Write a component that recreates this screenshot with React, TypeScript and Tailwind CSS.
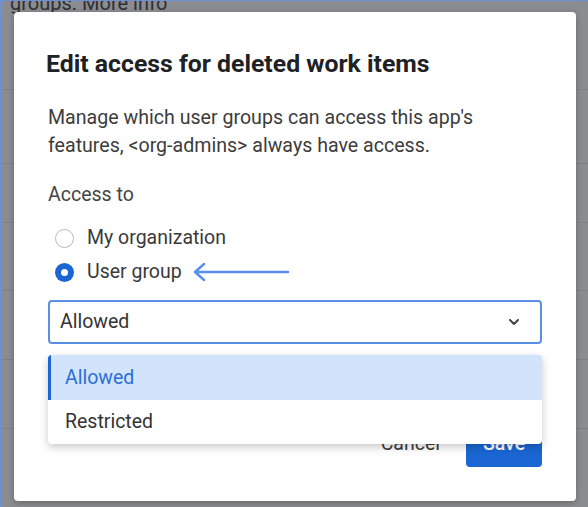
import { ChevronDown } from "lucide-react"

const rows = [89, 74, 59, 68, 69, 69, 79]

function Radio({ checked, label }: { checked?: boolean; label: string }) {
  return (
    <label className="flex items-center gap-[13px] h-[34px]">
      {checked ? (
        <span className="w-[19px] h-[19px] rounded-full bg-[#1a66d2] flex items-center justify-center">
          <span className="w-[7px] h-[7px] rounded-full bg-white" />
        </span>
      ) : (
        <span className="w-[19px] h-[19px] rounded-full border-[1.5px] border-[#b9b9b9] bg-white" />
      )}
      <span className="text-[19.5px] text-[#3a3a3a]">{label}</span>
    </label>
  )
}

export default function App() {
  return (
    <div className="relative w-[588px] h-[507px] overflow-hidden bg-[#8a8c90] font-['Roboto',sans-serif] border-l-2 border-t border-[#6d8fd8]">
      {/* page behind the overlay */}
      <div className="flex flex-col">
        {rows.map((h, i) => (
          <div key={i} style={{ height: h }} className="border-b border-[#7f8185] px-2">
            {i === 0 && <div className="text-[20px] leading-none -mt-[8px] text-[#2e2f31]">groups. More info</div>}
          </div>
        ))}
      </div>

      {/* dialog */}
      <div className="absolute left-[12px] top-[11px] w-[562px] h-[489px] bg-white rounded-[4px] shadow-[0_2px_6px_rgba(0,0,0,0.25)] px-[34px] pt-[37px]">
        <h2 className="-ml-[2px] text-[24.8px] leading-[30px] font-bold text-[#202124]">Edit access for deleted work items</h2>
        <p className="mt-[25px] text-[19.6px] leading-[28px] text-[#3c3c3c]">
          Manage which user groups can access this app's
          <br />
          features, &lt;org-admins&gt; always have access.
        </p>
        <div className="mt-[21px] text-[19.5px] leading-[28px] text-[#444]">Access to</div>
        <div className="mt-[12px] pl-[7px] flex flex-col">
          <Radio label="My organization" />
          <div className="flex items-center">
            <Radio checked label="User group" />
            <svg width="100" height="20" viewBox="0 0 100 20" className="ml-[10px]">
              <path d="M3 10 H96 M12 2 L3 10 L12 18" fill="none" stroke="#5b8fee" strokeWidth="2.5" strokeLinecap="round" strokeLinejoin="round" />
            </svg>
          </div>
        </div>

        <div className="relative mt-[11px]">
          <div className="h-[44px] border-2 border-[#5b8fe6] rounded-[4px] flex items-center justify-between pl-[10px] pr-[18px]">
            <span className="text-[19.5px] text-[#333]">Allowed</span>
            <ChevronDown size={16} strokeWidth={3} className="text-[#444]" />
          </div>

          {/* open options list */}
          <div className="absolute left-0 right-0 top-[55px] z-10 bg-white rounded-[4px] shadow-[0_3px_8px_rgba(0,0,0,0.22)] overflow-hidden">
            <div className="h-[45px] bg-[#d2e3fc] border-l-[3px] border-[#1a66d2] flex items-center pl-[14px] text-[19.5px] text-[#2c6fd6]">Allowed</div>
            <div className="h-[44px] flex items-center pl-[17px] text-[19.5px] text-[#333]">Restricted</div>
          </div>

          <div className="mt-[77px] flex justify-end items-center gap-[26px]">
            <button className="text-[19.5px] text-[#3c3c3c]">Cancel</button>
            <button className="h-[46px] w-[76px] rounded-[4px] bg-[#1a66d2] text-white text-[19.5px] font-medium">Save</button>
          </div>
        </div>
      </div>
    </div>
  )
}
